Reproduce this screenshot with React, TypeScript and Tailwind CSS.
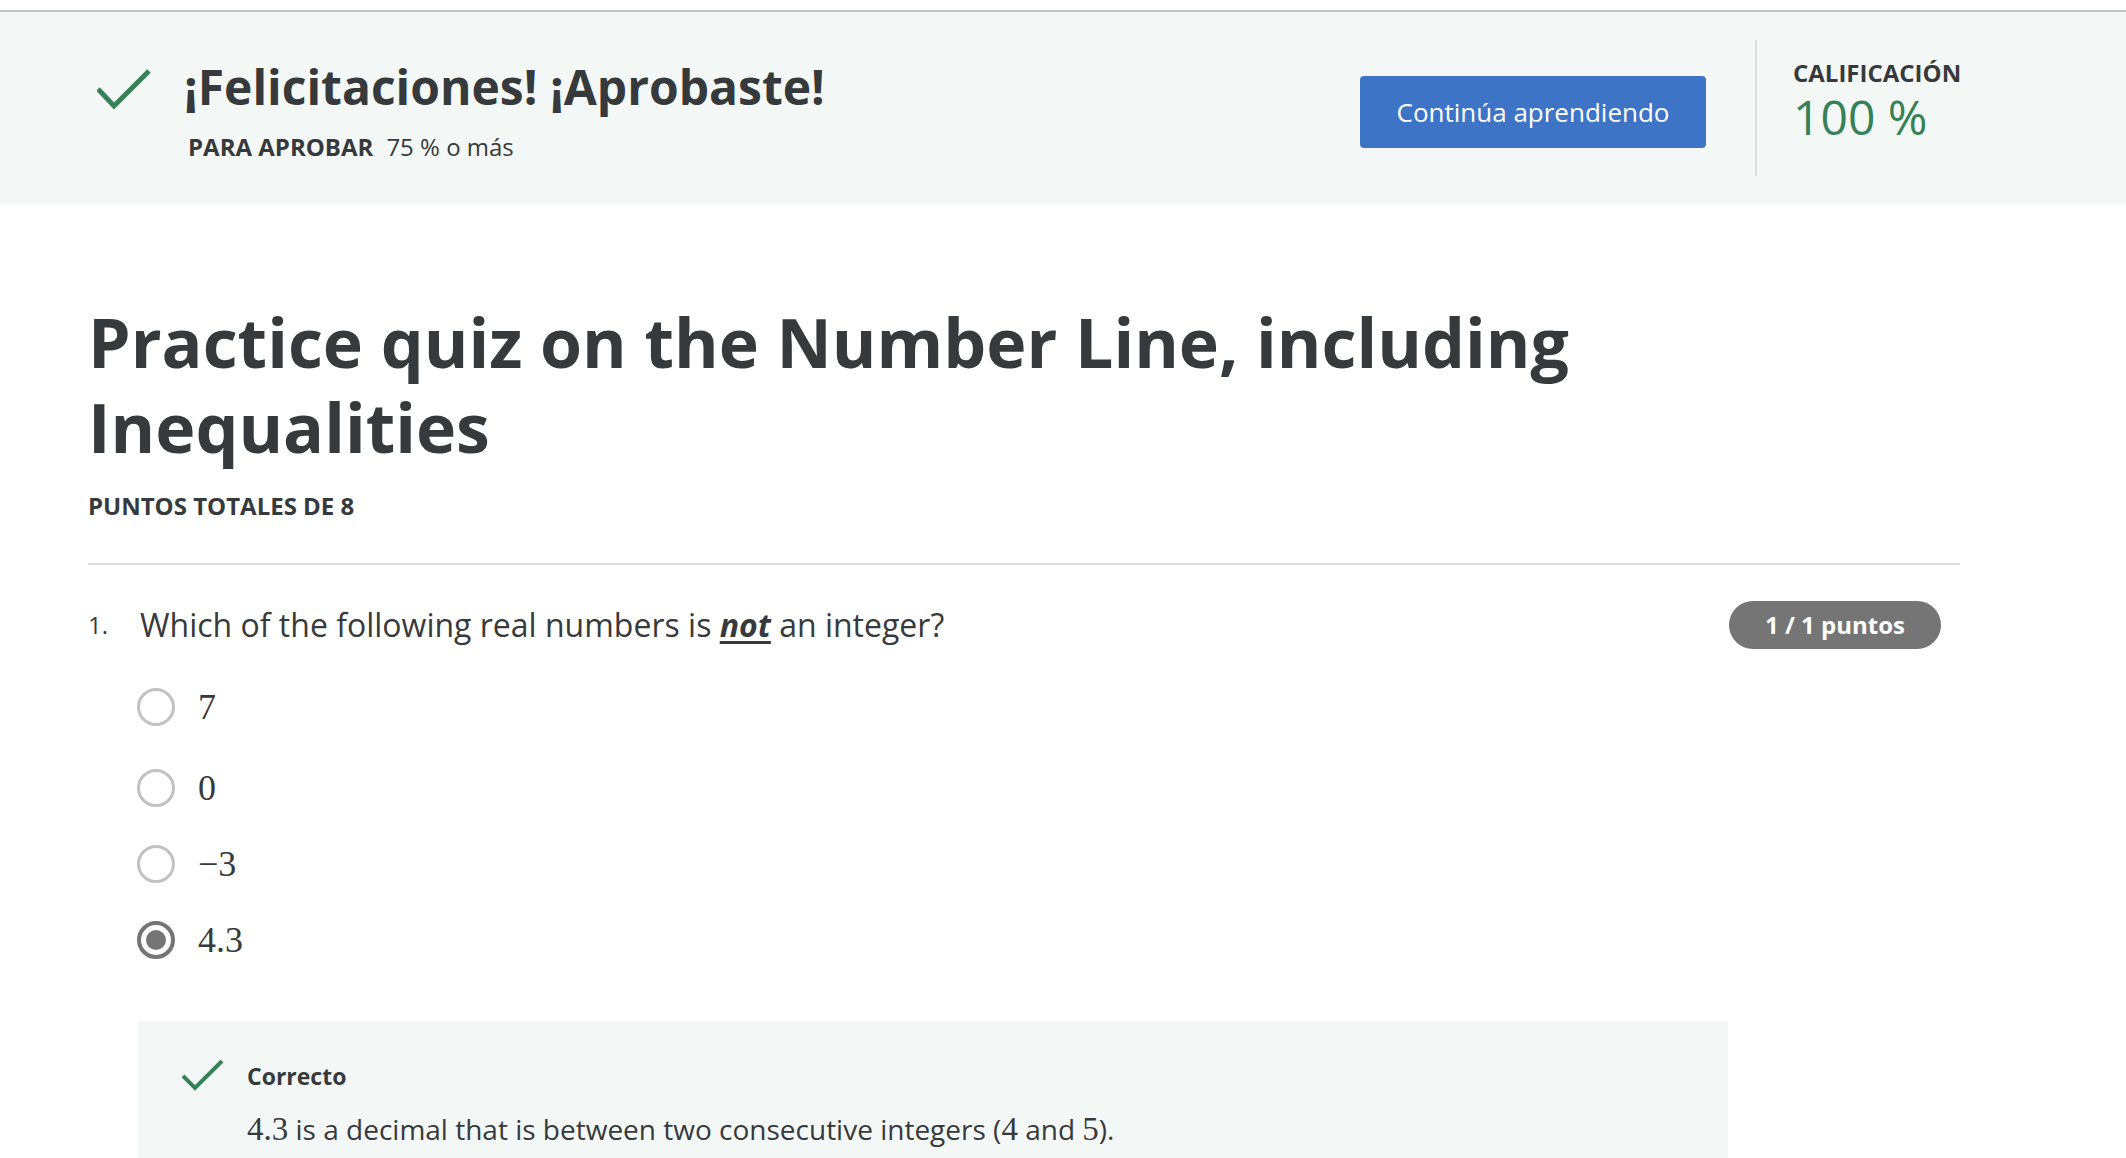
const green = '#368156'

function Check({ className, w, h, d, stroke }: { className?: string; w: number; h: number; d: string; stroke: number }) {
  return (
    <svg className={className} width={w} height={h} viewBox={`0 0 ${w} ${h}`} fill="none">
      <path d={d} stroke={green} strokeWidth={stroke} strokeLinecap="butt" strokeLinejoin="miter" />
    </svg>
  )
}

const options = ['7', '0', '\u22123', '4.3']
const selected = 3

function Radio({ checked }: { checked: boolean }) {
  if (checked) {
    return (
      <span className="flex h-[38px] w-[38px] shrink-0 items-center justify-center rounded-full border-[4px] border-[#757575]">
        <span className="h-[20px] w-[20px] rounded-full bg-[#757575]" />
      </span>
    )
  }
  return <span className="h-[38px] w-[38px] shrink-0 rounded-full border-[3px] border-[#c2c2c2]" />
}

export default function App() {
  return (
    <div className="min-h-screen bg-white font-['Open_Sans',sans-serif] text-[#373a3c]">
      <div className="h-[12px] border-b-2 border-[#c4c4c4]" />

      <header className="flex h-[193px] items-start bg-[#f3f8f6] pl-[97px] pr-[127px]">
        <div className="mt-[43px] flex-1">
          <div className="flex items-center gap-[33px]">
            <Check className="mt-[6px]" w={54} h={42} d="M1 20 L17 37 L52 2" stroke={5} />
            <h2 className="text-[48px] leading-[64px] font-bold">¡Felicitaciones! ¡Aprobaste!</h2>
          </div>
          <p className="mt-[12px] pl-[91px] text-[24px] leading-[32px]">
            <span className="font-bold">PARA APROBAR</span>
            <span className="ml-[13px]">75 % o más</span>
          </p>
        </div>

        <button className="mt-[64px] h-[72px] w-[346px] rounded-[4px] bg-[#3d74c6] text-[26px] font-normal text-white">
          Continúa aprendiendo
        </button>

        <div className="ml-[49px] mt-[28px] h-[136px] w-[2px] bg-[#dedede]" />

        <div className="ml-[36px] mt-[45px] w-[206px]">
          <p className="text-[24px] leading-[32px] font-bold">CALIFICACIÓN</p>
          <p className="mt-[1px] text-[48px] leading-[53px]" style={{ color: green }}>100 %</p>
        </div>
      </header>

      <main className="w-[1960px] pl-[88px]">
        <h1 className="mt-[94px] max-w-[1640px] text-[68px] leading-[85px] font-bold">
          Practice quiz on the Number Line, including Inequalities
        </h1>
        <p className="mt-[21px] text-[24px] leading-[32px] font-bold">PUNTOS TOTALES DE 8</p>

        <div className="mt-[41px] h-[2px] bg-[#dddddd]" />

        <div className="mt-[34px] flex h-[52px] items-center pr-[19px]">
          <span className="w-[52px] text-[24px] leading-[34px]">1.</span>
          <p className="flex-1 text-[32px] leading-[44px]">
            Which of the following real numbers is{' '}
            <span className="font-bold italic underline underline-offset-4">not</span> an integer?
          </p>
          <span className="flex h-[48px] w-[212px] items-center justify-center rounded-full bg-[#757575] text-[24px] font-bold text-white">
            1 / 1 puntos
          </span>
        </div>

        <div className="mt-[13px] pl-[49px]">
          {options.map((o, i) => (
            <div key={o} className={`flex items-center gap-[23px] ${i === 0 ? 'h-[86px]' : 'h-[76px]'}`}>
              <Radio checked={i === selected} />
              <span className="font-['Liberation_Serif',serif] text-[36px] leading-none">{o}</span>
            </div>
          ))}
        </div>

        <div className="ml-[50px] mt-[43px] w-[1590px] bg-[#f3f8f6] pb-[40px] pl-[44px] pt-[39px]">
          <div className="flex items-center gap-[23px]">
            <Check w={42} h={31} d="M1 16 L13 28 L40 1" stroke={4} />
            <span className="text-[23px] leading-[30px] font-bold">Correcto</span>
          </div>
          <p className="mt-[19px] pl-[65px] text-[28px] leading-[38px]">
            <span className="font-['Liberation_Serif',serif] text-[33px]">4.3</span> is a decimal that is between two consecutive integers (
            <span className="font-['Liberation_Serif',serif] text-[33px]">4</span> and{' '}
            <span className="font-['Liberation_Serif',serif] text-[33px]">5</span>).
          </p>
        </div>
      </main>
    </div>
  )
}
